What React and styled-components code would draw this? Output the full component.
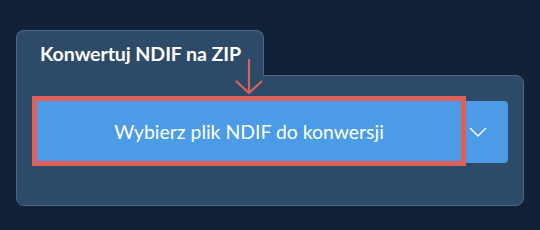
import React from 'react'
import styled, { createGlobalStyle } from 'styled-components'

const GlobalStyle = createGlobalStyle`
  html, body {
    margin: 0;
    padding: 0;
    background: #112238;
    font-family: Lato, "Open Sans", sans-serif;
  }
`

const Page = styled.div`
  width: 540px;
  height: 230px;
  padding: 30px 16px 0 16px;
  box-sizing: border-box;
  background: #112238;
`

const Card = styled.div`
  position: relative;
  width: 508px;
`

const Tab = styled.div`
  position: relative;
  z-index: 1;
  width: 248px;
  height: 46px;
  box-sizing: border-box;
  margin-bottom: -1px;
  padding: 11px 0 0 23px;
  background: #2d4a69;
  border: 1px solid #4f6784;
  border-bottom: none;
  border-radius: 8px 8px 0 0;
  color: #ffffff;
  font-weight: 700;
  font-size: 19.6px;
  letter-spacing: -0.1px;
`

const Panel = styled.div`
  height: 131px;
  box-sizing: border-box;
  padding: 20px 15px 0 15px;
  background: #2d4a69;
  border: 1px solid #4f6784;
  border-radius: 0 8px 8px 8px;
`

const ButtonRow = styled.div`
  display: flex;
  align-items: center;
`

const Highlight = styled.div`
  border: 5px solid #de605b;
`

const MainButton = styled.button`
  display: flex;
  align-items: center;
  justify-content: center;
  width: 424px;
  height: 60px;
  border: none;
  background: #4b9be6;
  color: #ffffff;
  font-family: Lato, "Open Sans", sans-serif;
  font-size: 19.4px;
  font-weight: 400;
  padding: 0;
`

const DropButton = styled.button`
  display: flex;
  align-items: center;
  width: 42px;
  height: 62px;
  margin-top: 2px;
  padding: 0 0 0 3px;
  border: none;
  border-radius: 0 4px 4px 0;
  background: #4b9be6;
`

const Arrow = styled.svg`
  position: absolute;
  left: 218px;
  top: 28px;
  z-index: 2;
`

export default function App() {
  return (
    <>
      <GlobalStyle />
      <Page>
        <Card>
          <Tab>Konwertuj NDIF na ZIP</Tab>
          <Panel>
            <ButtonRow>
              <Highlight>
                <MainButton>Wybierz plik NDIF do konwersji</MainButton>
              </Highlight>
              <DropButton>
                <svg width="18" height="12" viewBox="0 0 18 12">
                  <polyline points="1,2 9,10 17,2" fill="none" stroke="#ffffff" strokeWidth="1.4" />
                </svg>
              </DropButton>
            </ButtonRow>
          </Panel>
          <Arrow width="32" height="38" viewBox="0 0 32 38">
            <line x1="15" y1="1" x2="15" y2="35" stroke="#de605b" strokeWidth="2.2" />
            <polyline points="2,23 15,35 28,23" fill="none" stroke="#de605b" strokeWidth="2.2" />
          </Arrow>
        </Card>
      </Page>
    </>
  )
}
